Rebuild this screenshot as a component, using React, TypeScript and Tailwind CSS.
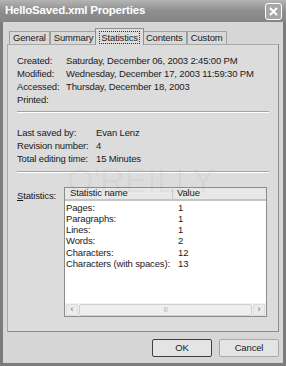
import React from "react";

const dates = [
    ["Created:", "Saturday, December 06, 2003 2:45:00 PM"],
    ["Modified:", "Wednesday, December 17, 2003 11:59:30 PM"],
    ["Accessed:", "Thursday, December 18, 2003"],
    ["Printed:", ""],
];

const info = [
    ["Last saved by:", "Evan Lenz"],
    ["Revision number:", "4"],
    ["Total editing time:", "15 Minutes"],
];

const stats = [
    ["Pages:", "1"],
    ["Paragraphs:", "1"],
    ["Lines:", "1"],
    ["Words:", "2"],
    ["Characters:", "12"],
    ["Characters (with spaces):", "13"],
];

const tabs = ["General", "Summary", "Statistics", "Contents", "Custom"];

const Tab = ({ label, active }: { label: string; active: boolean }) =>
    active ? (
        <div className="relative z-10 -mx-[2px] -mb-px flex h-[17px] items-center border border-b-0 border-[#909090] bg-[#dcdcdc] px-[3px]">
            <span className="border border-dotted border-[#303030] px-[1px] leading-[11px]">
                {label}
            </span>
        </div>
    ) : (
        <div className="mt-[3px] flex h-[13px] items-center border border-b-0 border-[#a0a0a0] bg-[#d8d8d8] px-[3px]">
            {label}
        </div>
    );

export default function App() {
    return (
        <div
            className="flex h-[366px] w-[286px] flex-col overflow-hidden whitespace-nowrap bg-[#7c7c7c] text-[9.5px] tracking-[-0.15px] text-[#1a1a1a]"
            style={{ fontFamily: '"Liberation Sans", Arial, sans-serif' }}
        >
            {/* title bar */}
            <div className="flex h-[22px] shrink-0 items-center justify-between bg-gradient-to-b from-[#b4b4b4] via-[#8e8e8e] to-[#868686] pl-[5px] pr-[4px]">
                <span className="text-[11.5px] font-bold tracking-[-0.2px] text-white">
                    HelloSaved.xml Properties
                </span>
                <div className="flex h-[17px] w-[17px] items-center justify-center rounded-[3px] border border-white bg-[#a6a6a6]">
                    <svg width="11" height="11" viewBox="0 0 11 11">
                        <path
                            d="M2 2 L9 9 M9 2 L2 9"
                            stroke="white"
                            strokeWidth="2"
                        />
                    </svg>
                </div>
            </div>

            {/* body */}
            <div className="mx-[3px] mb-[3px] flex flex-1 flex-col bg-[#d6d6d6] px-[4px]">
                <div className="mt-[6px] flex h-[16px] items-end pl-[2px]">
                    {tabs.map((t) => (
                        <Tab key={t} label={t} active={t === "Statistics"} />
                    ))}
                </div>

                <div className="flex h-[288px] flex-col border border-t-[#a8a8a8] border-l-[#a8a8a8] border-r-[#8c8c8c] border-b-[#8c8c8c] bg-[#dcdcdc] px-[9px]">
                    <div className="mt-[10px] flex flex-col">
                        {dates.map(([k, v]) => (
                            <div key={k} className="flex h-[13px] items-center">
                                <span className="w-[49px] shrink-0">{k}</span>
                                <span>{v}</span>
                            </div>
                        ))}
                    </div>
                    <div className="mt-[4px] h-[2px] border-t border-b border-t-[#a4a4a4] border-b-white" />
                    <div className="mt-[14px] flex flex-col">
                        {info.map(([k, v]) => (
                            <div key={k} className="flex h-[13px] items-center">
                                <span className="w-[79px] shrink-0">{k}</span>
                                <span>{v}</span>
                            </div>
                        ))}
                    </div>
                    <div className="mt-[5px] h-[2px] border-t border-b border-t-[#a4a4a4] border-b-white" />

                    <div className="relative mt-[14px] flex">
                        <span className="mt-[2px] w-[47px] shrink-0">
                            <span className="underline">S</span>tatistics:
                        </span>
                        <div className="flex h-[130px] w-[203px] flex-col border border-[#8c8c8c] bg-white">
                            <div className="flex h-[13px] items-center border-b-2 border-[#c4c4c4] bg-[#e8e8e8]">
                                <span className="w-[108px] shrink-0 border-r border-[#c8c8c8] pl-[5px]">
                                    Statistic name
                                </span>
                                <span className="pl-[4px]">Value</span>
                            </div>
                            <div className="flex flex-1 flex-col pt-[1px]">
                                {stats.map(([k, v]) => (
                                    <div key={k} className="flex h-[11.3px] items-center">
                                        <span className="w-[113px] shrink-0 pl-[1px]">{k}</span>
                                        <span>{v}</span>
                                    </div>
                                ))}
                            </div>
                            {/* scrollbar */}
                            <div className="flex h-[13px] items-center gap-[1px] bg-[#f2f2f2] px-[1px]">
                                <div className="flex h-[12px] w-[12px] items-center justify-center border border-[#dcdcdc] bg-[#ebebeb] text-[9px] text-[#666]">
                                    ‹
                                </div>
                                <div className="flex h-[12px] flex-1 items-center justify-center rounded-[2px] border border-[#cfcfcf] bg-[#efefef] text-[6px] text-[#aaa]">
                                    |||
                                </div>
                                <div className="flex h-[12px] w-[12px] items-center justify-center border border-[#dcdcdc] bg-[#ebebeb] text-[9px] text-[#666]">
                                    ›
                                </div>
                            </div>
                        </div>
                        <span className="pointer-events-none absolute left-[50px] top-[-24px] z-10 text-[34px] leading-none tracking-[0px] text-black/[0.04]">
                            O'REILLY<sup className="text-[9px]">®</sup>
                        </span>
                    </div>
                </div>

                <div className="mt-[7px] flex justify-end gap-[7px]">
                    <button className="flex h-[18px] w-[60px] items-center justify-center rounded-[2px] border border-[#404040] bg-[#e4e4e4]">
                        OK
                    </button>
                    <button className="flex h-[18px] w-[60px] items-center justify-center rounded-[2px] border border-[#a8a8a8] bg-[#e4e4e4]">
                        Cancel
                    </button>
                </div>
            </div>
        </div>
    );
}
